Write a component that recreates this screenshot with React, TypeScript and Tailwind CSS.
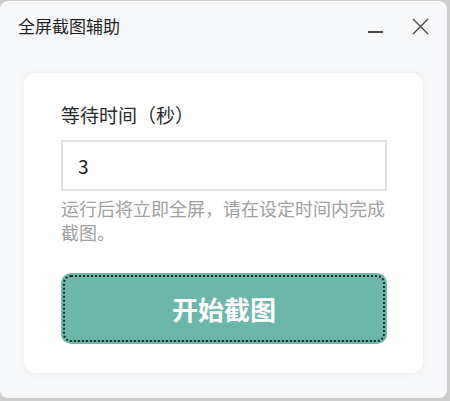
import { useState } from "react";

const font = { fontFamily: '"Noto Sans CJK SC", "Noto Sans", sans-serif' };

function TitleBar() {
  return (
    <div className="flex h-[50px] shrink-0 items-center pl-[18px] pr-[18px]">
      <span className="text-[17px] text-[#1f1f1f]">全屏截图辅助</span>
      <div className="ml-auto flex items-center gap-[28px]">
        <button type="button" className="flex h-[16px] w-[16px] items-end justify-center">
          <span className="mb-[1px] block h-[2px] w-[15px] bg-[#4a4a4a]" />
        </button>
        <button type="button" className="flex h-[18px] w-[18px] items-center justify-center text-[#4a4a4a]">
          <svg width="17" height="17" viewBox="0 0 17 17" fill="none" stroke="currentColor" strokeWidth="1.4">
            <path d="M1 1L16 16M16 1L1 16" />
          </svg>
        </button>
      </div>
    </div>
  );
}

export default function App() {
  const [delay, setDelay] = useState("3");

  return (
    <div className="h-[401px] w-[450px] bg-[#cdcdcd] pt-px" style={font}>
      <div className="flex h-[397px] w-[447px] flex-col rounded-[8px] bg-[#f7f8fa]">
        <TitleBar />

        <div className="mx-[24px] mt-[22px] flex h-[300px] flex-col rounded-[12px] bg-white pl-[37px] pr-[36px] pt-[28px] shadow-[0_0_8px_rgba(0,0,0,0.06)]">
          <label className="text-[19px] leading-[28px] text-[#2a2a2a]">等待时间（秒）</label>

          <input
            value={delay}
            onChange={(e) => setDelay(e.target.value)}
            className="mt-[11px] h-[51px] w-full border-2 border-[#e2e2e2] bg-white px-[15px] text-[19px] text-[#1a1a1a] outline-none"
          />

          <p className="mt-[5px] text-[18px] leading-[24px] text-[#a0a0a0]">
            运行后将立即全屏，请在设定时间内完成截图。
          </p>

          <button
            type="button"
            className="mt-[29px] flex h-[71px] w-full items-center justify-center rounded-[10px] bg-[#6db6aa] text-[26px] font-bold text-white outline-2 -outline-offset-4 outline-[#1c2a27] outline-dotted"
          >
            开始截图
          </button>
        </div>
      </div>
    </div>
  );
}
